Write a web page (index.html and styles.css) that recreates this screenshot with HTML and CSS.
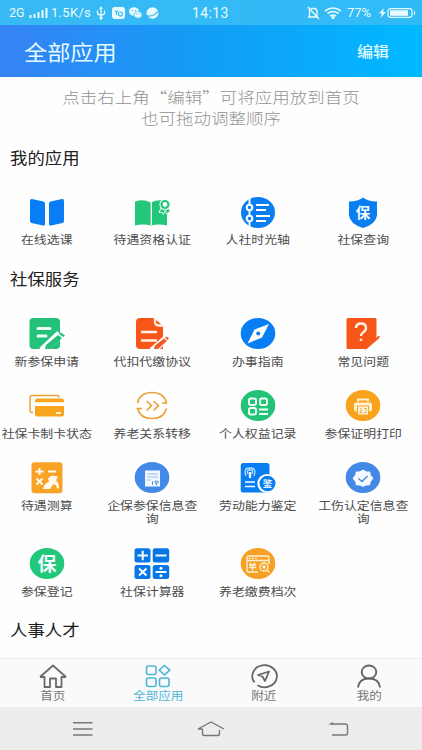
FILE: index.html
```html
<!DOCTYPE html>
<html lang="zh-CN">
<head>
<meta charset="utf-8">
<meta name="viewport" content="width=device-width">
<title>全部应用</title>
<link rel="stylesheet" href="styles.css">
</head>
<body>
<div class="phone">
  <div class="status">
    <span class="net">2G</span>
    <svg class="signal" width="19" height="12"><path d="M1.5 11V8M5.500 11V7M9.500 11V5M13.500 11V3M17.500 11V1" stroke="#e9fbff" stroke-width="2"/></svg>
    <span class="speed">1.5K/s</span>
    <svg class="usb" width="10" height="14" fill="none" stroke="#e9fbff" stroke-width="1.3"><path d="M5 2v10M1.500 4.500v2.500q0 2 3.500 2q3.500 0 3.500-2V4.500"/><path d="M5 0l1.800 3H3.200z" fill="#e9fbff" stroke="none"/><circle cx="5" cy="12" r="1"/></svg>
    <svg class="app1" width="13" height="12"><rect width="13" height="12" rx="3" fill="#e9fbff"/><path d="M3 3.500l1.500 2 1.500-2M4.500 5.500v2.500" fill="none" stroke="#32b7f3" stroke-width="1.100"/><circle cx="8.500" cy="7" r="2" fill="none" stroke="#32b7f3" stroke-width="1.100"/></svg>
    <svg class="app2" width="13" height="12"><ellipse cx="5" cy="4.500" rx="5" ry="4.200" fill="#e9fbff"/><ellipse cx="9" cy="7.800" rx="4" ry="3.500" fill="#e9fbff" stroke="#32b7f3" stroke-width=".7"/><path d="M3 3.500h1M6 3.500h1M7.500 7h1M10 7h1" stroke="#32b7f3" stroke-width="1.200"/></svg>
    <svg class="app3" width="13" height="12"><ellipse cx="6.500" cy="6" rx="6" ry="5.700" fill="#e9fbff"/><path d="M1 9q7 1 11-5" fill="none" stroke="#32b7f3" stroke-width="1.300"/></svg>
    <span class="clock">14:13</span>
    <svg class="bell" width="13" height="14" fill="none" stroke="#e9fbff" stroke-width="1.400"><path d="M1 11h10M2.500 11V3M4 2.500h3q3 0 3 3.500v5M1 1l11 12"/></svg>
    <svg class="wifi" width="18" height="12" fill="none" stroke="#e9fbff" stroke-width="1.700"><path d="M1 4q8-6 16 0M3.500 6.500q5.500-4 11 0M6 9q3-2 6 0"/><circle cx="9" cy="10.500" r=".8" fill="#e9fbff"/></svg>
    <span class="pct">77%</span>
    <svg class="batt" width="37" height="12"><path d="M5 1L0 6.500h3L1.500 11 7 5H4z" fill="#e9fbff"/><rect x="9" y="1.700" width="24" height="8.600" rx="2.500" fill="none" stroke="#e9fbff" stroke-width="1.200"/><rect x="11" y="3.200" width="18" height="5.600" fill="#e9fbff"/><path d="M35 4q1.500 2 0 4" stroke="#e9fbff" fill="none"/></svg>
  </div>

  <header class="bar">
    <h1 class="title squash">全部应用</h1>
    <span class="edit squash">编辑</span>
  </header>

  <main class="content">
    <p class="hint"><span class="squash">点击右上角“编辑”可将应用放到首页</span><span class="squash">也可拖动调整顺序</span></p>

    <h2 class="heading"><span class="squash">我的应用</span></h2>
    <div class="grid">
      <div class="item">
        <svg class="icon" viewBox="0 0 36 32"><path d="M1 4q0-2.500 2-2l11.500 2.500q1.500.4 1.500 2V27q0 2-2 1.500L2.500 26Q1 25.500 1 24zM35 4q0-2.500-2-2l-11.500 2.500q-1.500.4-1.500 2V27q0 2 2 1.500l11.500-2.500Q35 25.500 35 24z" fill="#087df5"/></svg>
        <span class="label squash">在线选课</span>
      </div>
      <div class="item">
        <svg class="icon" viewBox="0 0 36 32"><path d="M1 4.500q8-3 16 1q8-4 16-1v24q-8-2-16 0q-8-2-16 0z" fill="#24c779"/><path d="M17.300 5v23" stroke="#e9fff4" stroke-width="1.400"/><path d="M27 11l-2 4.500 3-.3 1.300 2.300 2-4 2 4 1.200-2.300 2.200.3-2.300-5" fill="#24c779" stroke="#fff" stroke-width=".9"/><circle cx="31" cy="7.500" r="5.500" fill="#fff"/><circle cx="31" cy="7.500" r="3.500" fill="#fff" stroke="#24c779" stroke-width="2.200"/></svg>
        <span class="label squash">待遇资格认证</span>
      </div>
      <div class="item">
        <svg class="icon" viewBox="0 0 36 32"><ellipse cx="18" cy="15.500" rx="17" ry="15.500" fill="#087ef0"/><path d="M9.500 0v31M16 8h13M16 13h10M16 19h14M16 24h10" stroke="#fff" stroke-width="1.900"/><circle cx="9.500" cy="10.500" r="2.800" fill="#087ef0" stroke="#fff" stroke-width="2"/><circle cx="9.500" cy="21.500" r="2.800" fill="#087ef0" stroke="#fff" stroke-width="2"/></svg>
        <span class="label squash">人社时光轴</span>
      </div>
      <div class="item">
        <svg class="icon" viewBox="0 0 36 32"><path d="M18 .5q5 4 14 4v14q-1 8.500-14 12.500Q5 27 4 18.500V4.500q9 0 14-4z" fill="#087ef0"/><text x="18" y="20.500" class="glyph">保</text></svg>
        <span class="label squash">社保查询</span>
      </div>
    </div>

    <h2 class="heading"><span class="squash">社保服务</span></h2>
    <div class="grid">
      <div class="item">
        <svg class="icon" viewBox="0 0 36 32"><rect x=".5" width="30.500" height="31" rx="4" fill="#24c17b"/><path d="M9 10.500h12M9 18h8" stroke="#effff8" stroke-width="3" stroke-linecap="round"/><path d="M13 33L31 16" stroke="#fff" stroke-width="8"/><path d="M16 31l1-4L29 17l4 3-12 11zM30 16l2-1.500 4 3L34 19z" fill="#24c17b"/></svg>
        <span class="label squash">新参保申请</span>
      </div>
      <div class="item">
        <svg class="icon" viewBox="0 0 36 32"><path d="M6 0h14l9 8v23H6q-4 0-4-4V4q0-4 4-4z" fill="#f85619"/><path d="M21 0v4q0 3.500 4 3.500h5M7 14h16M7 22.500h16" fill="none" stroke="#fff1e8" stroke-width="2.300"/><path d="M18 33l15-13" stroke="#fff" stroke-width="7"/><path d="M20 31l1-3.500 9-7 3 2.500-9 8zM31 19.800l1.500-1.300 2.500 2-1.500 1.500z" fill="#f05a22"/></svg>
        <span class="label squash">代扣代缴协议</span>
      </div>
      <div class="item">
        <svg class="icon" viewBox="0 0 36 32"><ellipse cx="18" cy="15.500" rx="17.300" ry="15.500" fill="#087ef5"/><path d="M29 6l-7 13.500L7.500 25.500l7-14z" fill="#fff"/><circle cx="18.200" cy="15.500" r="2" fill="#087ef5"/></svg>
        <span class="label squash">办事指南</span>
      </div>
      <div class="item">
        <svg class="icon" viewBox="0 0 36 32"><rect x="1.500" width="30" height="31" rx="1.500" fill="#f85619"/><path d="M11 10q0-4.500 5-4.500t5 4.500q0 2.500-3 4.500-2 1.200-2 3.500" fill="none" stroke="#fff2eb" stroke-width="2.300"/><circle cx="16" cy="21.800" r="1.400" fill="#fff2eb"/><path d="M18 32.500L37 17v15z" fill="#fff"/><path d="M20 31l13.500-11.500" stroke="#f05a22" stroke-width="2.200"/><path d="M33 19.500l1.500-1.200" stroke="#f05a22" stroke-width="2"/></svg>
        <span class="label squash">常见问题</span>
      </div>

      <div class="item">
        <svg class="icon" viewBox="0 0 36 32"><path d="M4 22.500H2.500q-1.500 0-1.500-2V8q0-2.500 2-2.500h25q2 0 2.300 2" fill="none" stroke="#eea03b" stroke-width="1.500"/><path d="M6 12.300V11q0-2.500 2-2.500h25q2 0 2 2.500v1.300zM6 16h29v8.500q0 2-2 2H8q-2 0-2-2z" fill="#faa51e"/><path d="M27 23h5" stroke="#fff" stroke-width="1.700"/></svg>
        <span class="label squash">社保卡制卡状态</span>
      </div>
      <div class="item">
        <svg class="icon" viewBox="0 0 36 32"><path d="M3.500 13Q6 2.500 18 2.500q12 0 14.500 10.500H28M32.500 18.500Q30 28.500 18 28.500q-12 0-14.500-10H8M12.500 11l5 4.700-5 4.800M19.500 11l5 4.700-5 4.800" fill="none" stroke="#eba23d" stroke-width="1.700"/></svg>
        <span class="label squash">养老关系转移</span>
      </div>
      <div class="item">
        <svg class="icon" viewBox="0 0 36 32"><ellipse cx="18" cy="15.500" rx="17.300" ry="15.500" fill="#24c277"/><g fill="none" stroke="#f0fff8" stroke-width="1.900"><rect x="9" y="8.500" width="7" height="6.500" rx="1.800"/><rect x="20" y="8.500" width="7" height="6.500" rx="1.800"/><rect x="9" y="18" width="7" height="6.500" rx="1.800"/><path d="M19 19.500h9M19 24h9"/></g></svg>
        <span class="label squash">个人权益记录</span>
      </div>
      <div class="item">
        <svg class="icon" viewBox="0 0 36 32"><ellipse cx="18" cy="15.500" rx="17.300" ry="15.500" fill="#f9a31c"/><path d="M13 11.500V9.500h10v2" stroke="#fff1d7" stroke-width="1.800" fill="none"/><rect x="9" y="12.500" width="18" height="9" rx="2" fill="#fff1d7"/><rect x="12.500" y="16" width="11" height="9" fill="#fff1d7" stroke="#f9a31c"/><path d="M16 18v5M14.500 22.500h3M19 18.500h2v4h-2" fill="none" stroke="#f0a63d"/></svg>
        <span class="label squash">参保证明打印</span>
      </div>

      <div class="item">
        <svg class="icon" viewBox="0 0 36 32"><rect x="2.500" y=".2" width="31" height="31" rx="3" fill="#f8a326"/><path d="M6.500 9.500h8M10.500 6v7M19 9.500h8M7.500 16.500l6 6M13.500 16.500l-6 6" stroke="#fff9ed" stroke-width="2"/><path d="M14 27q1-6 6-7l-1-3q2-4 7-3l3 .5-2 4q3 2 3 8h-2l-1-3.500-3-.5-3 4.500z" fill="#fff9ed"/></svg>
        <span class="label squash">待遇测算</span>
      </div>
      <div class="item">
        <svg class="icon" viewBox="0 0 36 32"><ellipse cx="18" cy="15.500" rx="17.300" ry="15.500" fill="#4489e6"/><rect x="11" y="8.500" width="15" height="16" fill="#f1f8ff"/><path d="M13 12h11M13 15h11M13 18h4" stroke="#b5cff2" stroke-width="1.600"/><path d="M18.500 19v4M21 19h3v2h-3zM22.500 21v2.500" fill="none" stroke="#5d98e0"/></svg>
        <span class="label squash">企保参保信息查询</span>
      </div>
      <div class="item">
        <svg class="icon" viewBox="0 0 36 32"><path d="M3 1h24q2.500 0 2.500 2.500V30.500H3q-2.300 0-2.300-2V3.500Q.7 1 3 1z" fill="#087ef0"/><g fill="none" stroke="#b9dfff" stroke-width="1.300"><path d="M6 14q-3-8 4-8t4 8M8 12q-2-4 2-4t2 4"/><path d="M10 10v6" stroke="#fff" stroke-width="2.400"/></g><path d="M5 20h10M5 24.500h10" stroke="#fff" stroke-width="1.700"/><ellipse cx="27" cy="21.500" rx="9.700" ry="9.500" fill="#fff"/><ellipse cx="27.500" cy="21.500" rx="8" ry="7.800" fill="#087ef0"/><text x="27.500" y="25" class="mini">鉴</text></svg>
        <span class="label squash">劳动能力鉴定</span>
      </div>
      <div class="item">
        <svg class="icon" viewBox="0 0 36 32"><ellipse cx="18" cy="15.500" rx="17.300" ry="15.500" fill="#4489e6"/><path d="M18 8.500l3 1.500 3.500.2.500 3 2.500 3.100-2.500 3.200-.5 3-3.500.2L18 24.200l-3-1.500-3.500-.2-.5-3-2.500-3.200 2.500-3.100.5-3 3.500-.2z" fill="#f3faff" stroke="#f3faff" stroke-width="1.500" stroke-linejoin="round"/><path d="M13.500 16.500l3.500 3 5.500-5.500" fill="none" stroke="#5087ba" stroke-width="1.400"/></svg>
        <span class="label squash">工伤认定信息查询</span>
      </div>

      <div class="item">
        <svg class="icon" viewBox="0 0 36 32"><ellipse cx="18" cy="15.500" rx="17.300" ry="15.500" fill="#22c879"/><text x="18" y="22.500" class="glyph large">保</text></svg>
        <span class="label squash">参保登记</span>
      </div>
      <div class="item">
        <svg class="icon" viewBox="0 0 36 32"><g fill="#0877e6"><rect x=".5" y=".3" width="16" height="14.300" rx="2.500"/><rect x="18.700" y=".3" width="16.500" height="14.300" rx="2.500"/><rect x=".5" y="17" width="16" height="14" rx="2.500"/><rect x="18.700" y="17" width="16.500" height="14" rx="2.500"/></g><path d="M3.500 7.500h10.500M8.700 2.800v9.500M21.500 7.500h11M5 20.500l7.500 7M12.500 20.500l-7.500 7M21.500 24h11" stroke="#f4fbff" stroke-width="2.100"/><circle cx="27" cy="20.300" r="1.500" fill="#fff"/><circle cx="27" cy="27.800" r="1.500" fill="#fff"/></svg>
        <span class="label squash">社保计算器</span>
      </div>
      <div class="item">
        <svg class="icon" viewBox="0 0 36 32"><ellipse cx="18" cy="15.500" rx="17.300" ry="15.500" fill="#f6a126"/><path d="M18 24H9q-2 0-2-2V10q0-2 2-2h18q2 0 2 2v6M7 12.500h22" fill="none" stroke="#fff1d7" stroke-width="1.400"/><path d="M9 10.300h9" stroke="#fff1d7" stroke-width="1.300" stroke-dasharray="2 1"/><path d="M10 15l1.500 1.500M15 15l-1.500 1.500M9 17h7M9 19.500h7M12.500 17v5.500" stroke="#fff1d7" stroke-width="1.300"/><circle cx="24" cy="19" r="4" fill="none" stroke="#fff1d7" stroke-width="1.300"/><circle cx="24" cy="19" r="1.700" fill="#fff1d7"/><path d="M26.500 22l3 2.500" stroke="#fff1d7" stroke-width="1.500"/></svg>
        <span class="label squash">养老缴费档次</span>
      </div>
    </div>

    <h2 class="heading"><span class="squash">人事人才</span></h2>
  </main>

  <nav class="tabs">
    <div class="tab">
      <svg width="28" height="24" fill="none" stroke="#6a6a6a" stroke-width="1.800" stroke-linejoin="round"><path d="M1 13L14 1.500 27 13M1 13h4.500v10H11v-8.500h6V23h5.500V13H27"/></svg>
      <span class="squash">首页</span>
    </div>
    <div class="tab active">
      <svg width="28" height="24" fill="none" stroke="#4fb5d7" stroke-width="1.600"><rect x="2.500" y="2" width="9.500" height="8.500" rx="2"/><path d="M20.500 1.500l5.300 4.700-5.300 4.800-5.300-4.800z" stroke-linejoin="round"/><rect x="2.500" y="14" width="9.500" height="8.500" rx="2"/><rect x="15.500" y="14" width="9.500" height="8.500" rx="2"/></svg>
      <span class="squash">全部应用</span>
    </div>
    <div class="tab">
      <svg width="28" height="24" fill="none" stroke="#666" stroke-width="1.800"><path d="M4.500 18.500A12.300 11 0 1 1 7.500 21.200"/><path d="M8 11l11-3.500-4 9.500-2.500-4.500z" stroke-linejoin="round"/></svg>
      <span class="squash">附近</span>
    </div>
    <div class="tab">
      <svg width="28" height="24" fill="none" stroke="#666" stroke-width="1.900"><ellipse cx="14" cy="8" rx="7.300" ry="6.500"/><path d="M3 23.500q1-9 11-9t11 9"/></svg>
      <span class="squash">我的</span>
    </div>
  </nav>

  <div class="keys">
    <svg width="22" height="16" stroke="#777" stroke-width="1.400"><path d="M1 1.800h19.500M1 8h19.500M1 14h19.500"/></svg>
    <svg width="28" height="16" fill="none" stroke="#777" stroke-width="1.400"><path d="M5.500 8H1L14 1l13 7M5.500 8v5q0 1.500 2 1.500h13q2 0 2-1.500V9"/></svg>
    <svg width="22" height="16" fill="none" stroke="#777" stroke-width="1.400"><path d="M3 3h14.500q2 0 2 2v7.500q0 1.500-2 1.500H4"/><path d="M0 3.500L5 1v2.500z" fill="#777" stroke="none"/></svg>
  </div>
</div>
</body>
</html>
```
FILE: styles.css
```css
* { box-sizing: border-box; margin: 0; padding: 0; }

body {
  font-family: "Noto Sans CJK SC", sans-serif;
  background: #fefefe;
}

.phone {
  width: 422px;
  height: 750px;
  display: flex;
  flex-direction: column;
  overflow: hidden;
}

svg { display: block; flex: none; overflow: visible; }

/* Slightly flattened lettering shared by all labels */
.squash { display: block; transform: scaleY(.9); }

.status {
  height: 25px;
  flex: none;
  display: flex;
  align-items: center;
  padding: 1px 6px 0 9px;
  background: linear-gradient(90deg, #38b9f3, #30bbf8);
  color: #e9fbff;
  font: 400 13px/22px Roboto, sans-serif;
  white-space: nowrap;
}
.net { width: 17px; font-size: 12.5px; }
.signal { margin-left: 3px; }
.speed { width: 40px; margin-left: 3px; letter-spacing: .3px; }
.usb { margin-left: 5px; }
.app1 { margin-left: 6px; }
.app2 { margin-left: 4px; }
.app3 { margin-left: 4px; }
.clock { margin-left: 33px; font-size: 14px; width: 38px; letter-spacing: .4px; }
.bell { margin-left: auto; }
.wifi { margin-left: 4px; }
.pct { margin-left: 5px; width: 27px; }
.batt { margin-left: 5px; }

.bar {
  height: 52px;
  flex: none;
  display: flex;
  align-items: center;
  justify-content: space-between;
  padding: 0 33px 0 24px;
  background: linear-gradient(90deg, #3783f3 0%, #149bf6 45%, #00b9ff 100%);
  color: #e3faff;
}
.title { font-size: 23.2px; font-weight: 400; line-height: 30px; }
.edit { font-size: 16px; font-weight: 500; line-height: 24px; }

.content { flex: 1; min-height: 0; padding-top: 10px; }

.hint {
  height: 41px;
  color: #939393;
  font-size: 17.5px;
  font-weight: 300;
  line-height: 20.500px;
  text-align: center;
}
.hint .squash { transform: scaleY(.86); }

.heading {
  margin: 22px 0 29px 10px;
  color: #202020;
  font-size: 17.4px;
  font-weight: 400;
  line-height: 20px;
}
.hint + .heading { margin-top: 20px; }

.grid {
  display: grid;
  grid-template-columns: repeat(4, 105.5px);
  row-gap: 22px;
  margin-left: -6px;
}
.item { display: flex; flex-direction: column; align-items: center; }
.icon { width: 36px; height: 32px; }
.label {
  width: 92px;
  margin-top: 4px;
  color: #4c4c4c;
  font-size: 12.9px;
  line-height: 14px;
  text-align: center;
}
.glyph { font-size: 14.5px; font-weight: 700; fill: #f4fbff; text-anchor: middle; }
.large { font-size: 19px; }
.mini { font-size: 9.5px; font-weight: 700; fill: #e4f4ff; text-anchor: middle; }

.tabs {
  height: 49px;
  flex: none;
  display: grid;
  grid-template-columns: repeat(4, 1fr);
  background: #fafafa;
  border-top: 1px solid #eaeaea;
}
.tab {
  display: flex;
  flex-direction: column;
  align-items: center;
  padding-top: 5px;
  color: #777;
  font-size: 12.6px;
  line-height: 15px;
}
.active { color: #4fb5d7; }

.keys {
  height: 43px;
  flex: none;
  display: flex;
  align-items: center;
  justify-content: space-between;
  padding: 0 72px;
  background: #ededed;
}
```
